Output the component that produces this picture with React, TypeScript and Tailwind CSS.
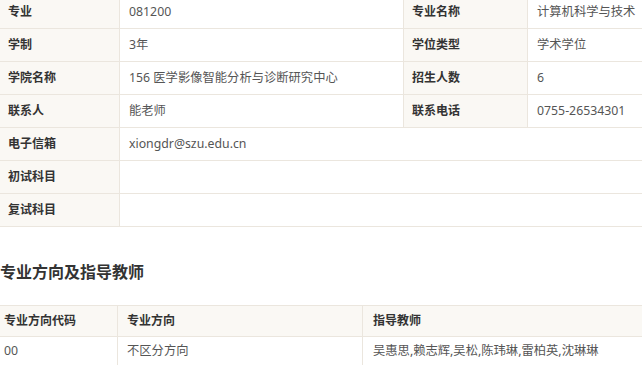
import React from 'react'

const font = { fontFamily: '"Noto Sans", "Noto Sans CJK SC", sans-serif' }

type Row = { label: string; value: string; label2?: string; value2?: string }

const rows: Row[] = [
  { label: '专业', value: '081200', label2: '专业名称', value2: '计算机科学与技术' },
  { label: '学制', value: '3年', label2: '学位类型', value2: '学术学位' },
  { label: '学院名称', value: '156 医学影像智能分析与诊断研究中心', label2: '招生人数', value2: '6' },
  { label: '联系人', value: '能老师', label2: '联系电话', value2: '0755-26534301' },
  { label: '电子信箱', value: 'xiongdr@szu.edu.cn' },
  { label: '初试科目', value: '' },
  { label: '复试科目', value: '' },
]

const th = 'bg-[#faf8f4] text-[#333] font-bold text-[12px] px-2 text-left border border-[#ebe6de]'
const td = 'bg-white text-[#555] text-[12.3px] px-[9px] text-left border border-[#ebe6de]'

export default function App() {
  return (
    <div className="w-[642px] h-[365px] overflow-hidden bg-white" style={font}>
      <table className="-mt-[5px] -ml-px border-collapse table-fixed w-[660px]">
        <colgroup>
          <col className="w-[120px]" />
          <col className="w-[284px]" />
          <col className="w-[124px]" />
          <col />
        </colgroup>
        <tbody>
          {rows.map((r) => (
            <tr key={r.label} className="h-[33px]">
              <th className={th}>{r.label}</th>
              {r.label2 ? (
                <>
                  <td className={td}>{r.value}</td>
                  <th className={th}>{r.label2}</th>
                  <td className={td}>{r.value2}</td>
                </>
              ) : (
                <td className={td} colSpan={3}>{r.value}</td>
              )}
            </tr>
          ))}
        </tbody>
      </table>

      <h2 className="mt-[33px] mb-[21px] text-[16px] font-bold text-[#333] leading-[24px]">专业方向及指导教师</h2>

      <table className="-ml-[7px] border-collapse table-fixed w-[670px]">
        <colgroup>
          <col className="w-[124px]" />
          <col className="w-[245px]" />
          <col />
        </colgroup>
        <thead>
          <tr className="h-[31px]">
            <th className={th + ' pl-[10px]'}>专业方向代码</th>
            <th className={th + ' pl-[9px]'}>专业方向</th>
            <th className={th + ' pl-[10px]'}>指导教师</th>
          </tr>
        </thead>
        <tbody>
          <tr className="h-[29px]">
            <td className={td + ' pl-[10px]'}>00</td>
            <td className={td}>不区分方向</td>
            <td className={td + ' pl-[10px]'}>吴惠思,赖志辉,吴松,陈玮琳,雷柏英,沈琳琳</td>
          </tr>
        </tbody>
      </table>
    </div>
  )
}
